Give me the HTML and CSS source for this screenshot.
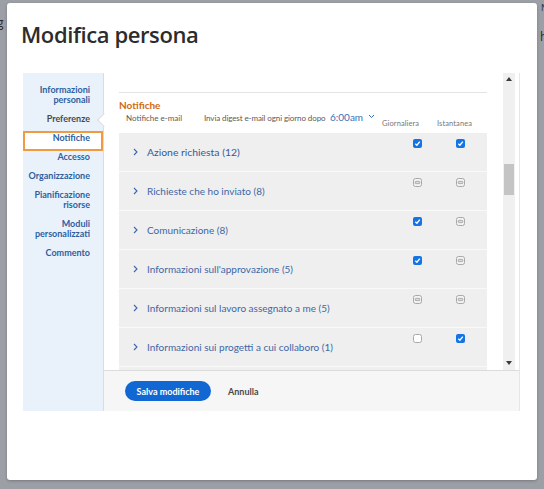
FILE: index.html
```html
<!DOCTYPE html>
<html lang="it">
<head>
<meta charset="utf-8">
<title>Modifica persona</title>
<link rel="stylesheet" href="styles.css">
</head>
<body>
<div class="backdrop">
  <span class="bg-l">g</span>
  <span class="bg-r1">N</span>
  <span class="bg-r2">h</span>
</div>
<div class="modal">
  <h1 class="title">Modifica persona</h1>
  <div class="panel">
    <nav class="side">
      <div class="nav-item">Informazioni<br>personali</div>
      <div class="nav-item current">Preferenze</div>
      <div class="nav-item active"><span>Notifiche</span></div>
      <div class="nav-item">Accesso</div>
      <div class="nav-item">Organizzazione</div>
      <div class="nav-item">Pianificazione<br>risorse</div>
      <div class="nav-item">Moduli<br>personalizzati</div>
      <div class="nav-item">Commento</div>
    </nav>
    <section class="main">
      <div class="notch"></div>
      <div class="scroll">
        <div class="content">
          <div class="cut"></div>
          <div class="sec-title">Notifiche</div>
          <div class="sub">
            <span class="s-email">Notifiche e-mail</span>
            <span class="s-digest">Invia digest e-mail ogni giorno dopo</span>
            <span class="s-time">6:00am <svg class="caret" width="7" height="5" viewBox="0 0 7 5"><polyline points="1,1 3.5,3.5 6,1" fill="none" stroke="#3a6fb7" stroke-width="1"/></svg></span>
            <span class="s-col s-col1">Giornaliera</span>
            <span class="s-col">Istantanea</span>
          </div>
          <div class="rows">
            <div class="row">
              <div class="label big"><svg class="chev" width="5" height="8" viewBox="0 0 5 8"><polyline points="1,1 4,4 1,7" fill="none" stroke="#3a66a8" stroke-width="1.1"/></svg>Azione richiesta (12)</div>
              <div class="cb"><svg width="9" height="9" viewBox="0 0 9 9"><rect x="0" y="0" width="9" height="9" rx="2" fill="#1473e6"/><polyline points="2.3,4.8 3.9,6.2 6.8,2.6" fill="none" stroke="#fff" stroke-width="1.4"/></svg></div>
              <div class="cb"><svg width="9" height="9" viewBox="0 0 9 9"><rect x="0" y="0" width="9" height="9" rx="2" fill="#1473e6"/><polyline points="2.3,4.8 3.9,6.2 6.8,2.6" fill="none" stroke="#fff" stroke-width="1.4"/></svg></div>
            </div>
            <div class="row">
              <div class="label"><svg class="chev" width="5" height="8" viewBox="0 0 5 8"><polyline points="1,1 4,4 1,7" fill="none" stroke="#3a66a8" stroke-width="1.1"/></svg>Richieste che ho inviato (8)</div>
              <div class="cb"><svg width="9" height="9" viewBox="0 0 9 9"><rect x="0.5" y="0.5" width="8" height="8" rx="2" fill="#f2f2f2" stroke="#a8a8a8"/><rect x="2.2" y="3.4" width="4.6" height="2.2" rx="0.6" fill="#dcdcdc" stroke="#a0a0a0" stroke-width="0.8"/></svg></div>
              <div class="cb"><svg width="9" height="9" viewBox="0 0 9 9"><rect x="0.5" y="0.5" width="8" height="8" rx="2" fill="#f2f2f2" stroke="#a8a8a8"/><rect x="2.2" y="3.4" width="4.6" height="2.2" rx="0.6" fill="#dcdcdc" stroke="#a0a0a0" stroke-width="0.8"/></svg></div>
            </div>
            <div class="row">
              <div class="label"><svg class="chev" width="5" height="8" viewBox="0 0 5 8"><polyline points="1,1 4,4 1,7" fill="none" stroke="#3a66a8" stroke-width="1.1"/></svg>Comunicazione (8)</div>
              <div class="cb"><svg width="9" height="9" viewBox="0 0 9 9"><rect x="0" y="0" width="9" height="9" rx="2" fill="#1473e6"/><polyline points="2.3,4.8 3.9,6.2 6.8,2.6" fill="none" stroke="#fff" stroke-width="1.4"/></svg></div>
              <div class="cb"><svg width="9" height="9" viewBox="0 0 9 9"><rect x="0.5" y="0.5" width="8" height="8" rx="2" fill="#f2f2f2" stroke="#a8a8a8"/><rect x="2.2" y="3.4" width="4.6" height="2.2" rx="0.6" fill="#dcdcdc" stroke="#a0a0a0" stroke-width="0.8"/></svg></div>
            </div>
            <div class="row">
              <div class="label"><svg class="chev" width="5" height="8" viewBox="0 0 5 8"><polyline points="1,1 4,4 1,7" fill="none" stroke="#3a66a8" stroke-width="1.1"/></svg>Informazioni sull'approvazione (5)</div>
              <div class="cb"><svg width="9" height="9" viewBox="0 0 9 9"><rect x="0" y="0" width="9" height="9" rx="2" fill="#1473e6"/><polyline points="2.3,4.8 3.9,6.2 6.8,2.6" fill="none" stroke="#fff" stroke-width="1.4"/></svg></div>
              <div class="cb"><svg width="9" height="9" viewBox="0 0 9 9"><rect x="0.5" y="0.5" width="8" height="8" rx="2" fill="#f2f2f2" stroke="#a8a8a8"/><rect x="2.2" y="3.4" width="4.6" height="2.2" rx="0.6" fill="#dcdcdc" stroke="#a0a0a0" stroke-width="0.8"/></svg></div>
            </div>
            <div class="row">
              <div class="label"><svg class="chev" width="5" height="8" viewBox="0 0 5 8"><polyline points="1,1 4,4 1,7" fill="none" stroke="#3a66a8" stroke-width="1.1"/></svg>Informazioni sul lavoro assegnato a me (5)</div>
              <div class="cb"><svg width="9" height="9" viewBox="0 0 9 9"><rect x="0.5" y="0.5" width="8" height="8" rx="2" fill="#f2f2f2" stroke="#a8a8a8"/><rect x="2.2" y="3.4" width="4.6" height="2.2" rx="0.6" fill="#dcdcdc" stroke="#a0a0a0" stroke-width="0.8"/></svg></div>
              <div class="cb"><svg width="9" height="9" viewBox="0 0 9 9"><rect x="0.5" y="0.5" width="8" height="8" rx="2" fill="#f2f2f2" stroke="#a8a8a8"/><rect x="2.2" y="3.4" width="4.6" height="2.2" rx="0.6" fill="#dcdcdc" stroke="#a0a0a0" stroke-width="0.8"/></svg></div>
            </div>
            <div class="row">
              <div class="label"><svg class="chev" width="5" height="8" viewBox="0 0 5 8"><polyline points="1,1 4,4 1,7" fill="none" stroke="#3a66a8" stroke-width="1.1"/></svg>Informazioni sui progetti a cui collaboro (1)</div>
              <div class="cb"><svg width="9" height="9" viewBox="0 0 9 9"><rect x="0.5" y="0.5" width="8" height="8" rx="2" fill="#ffffff" stroke="#a8a8a8"/></svg></div>
              <div class="cb"><svg width="9" height="9" viewBox="0 0 9 9"><rect x="0" y="0" width="9" height="9" rx="2" fill="#1473e6"/><polyline points="2.3,4.8 3.9,6.2 6.8,2.6" fill="none" stroke="#fff" stroke-width="1.4"/></svg></div>
            </div>
            <div class="row"></div>
          </div>
        </div>
        <div class="scrollbar">
          <svg class="arrow" width="6" height="4" viewBox="0 0 6 4"><polygon points="0,4 3,0 6,4" fill="#3a3a3a"/></svg>
          <div class="track"><div class="thumb"></div></div>
          <svg class="arrow" width="6" height="4" viewBox="0 0 6 4"><polygon points="0,0 6,0 3,4" fill="#3a3a3a"/></svg>
        </div>
      </div>
      <div class="footer">
        <button class="btn-primary" type="button">Salva modifiche</button>
        <button class="btn-link" type="button">Annulla</button>
      </div>
    </section>
  </div>
</div>
</body>
</html>
```

FILE: styles.css
```css
* { box-sizing: border-box; }

body {
  margin: 0;
  width: 544px;
  height: 489px;
  overflow: hidden;
  background: #9c9fa6;
  font-family: Lato, "Open Sans", sans-serif;
  position: relative;
}

.backdrop {
  position: absolute;
  inset: 0;
  color: #2b2b2b;
  font-size: 12px;
  font-family: "Open Sans", sans-serif;
}
.bg-l { position: absolute; left: -3px; top: 14px; }
.bg-r1 { position: absolute; left: 541px; top: 1px; font-size: 9px; }
.bg-r2 { position: absolute; left: 540px; top: 28px; }

.modal {
  position: relative;
  margin: 3px 0 0 7px;
  width: 530px;
  height: 477px;
  background: #fff;
  border-radius: 3px;
  box-shadow: 0 1px 3px rgba(0, 0, 0, 0.25);
  padding-left: 16px;
}

.title {
  margin: 0 0 0 -2px;
  padding: 16px 0 0 0;
  height: 70px;
  font-family: "Open Sans", sans-serif;
  font-size: 22px;
  font-weight: 600;
  line-height: 30px;
  color: #2c2c2c;
  letter-spacing: -0.4px;
}

.panel {
  display: flex;
  width: 497px;
  height: 338px;
}

.side {
  width: 80px;
  flex: none;
  background: #e9f2fb;
  padding-top: 7px;
}

.nav-item {
  position: relative;
  padding: 5px 13px 4px 0;
  text-align: right;
  font-size: 9px;
  font-weight: 700;
  line-height: 10px;
  color: #2d5f9f;
}
.nav-item.current { color: #4a4a4a; }
.nav-item.active span { position: relative; z-index: 1; }
.nav-item.active::before {
  content: "";
  position: absolute;
  left: 0;
  right: 0;
  top: 3px;
  bottom: -4px;
  background: #fff;
  border: 2px solid #f29a3f;
}

.main {
  position: relative;
  flex: 1;
  display: flex;
  flex-direction: column;
  border-left: 1px solid #dcdcdc;
  border-right: 1px solid #e6e6e6;
  background: #fff;
}

.notch {
  position: absolute;
  left: -5px;
  top: 42px;
  width: 10px;
  height: 10px;
  background: #fff;
  border-left: 1px solid #dcdcdc;
  border-bottom: 1px solid #dcdcdc;
  transform: rotate(45deg);
}

.scroll {
  display: flex;
  height: 297px;
}

.content {
  width: 399px;
  flex: none;
  padding-left: 15px;
  overflow: hidden;
}
.content > * { width: 368px; }

.cut {
  height: 20px;
  border-bottom: 1px solid #e3e3e3;
}

.sec-title {
  margin-top: 6px;
  font-size: 10px;
  line-height: 12px;
  font-weight: 700;
  color: #d2690f;
}

.sub {
  display: flex;
  align-items: flex-start;
  height: 22px;
  font-size: 8px;
  line-height: 10px;
  color: #5a5a5a;
}
.s-email { margin: 2px 0 0 7px; width: 78px; flex: none; }
.s-digest { margin-top: 2px; width: 126px; flex: none; letter-spacing: -0.1px; }
.s-time {
  width: 52px;
  flex: none;
  font-size: 10px;
  line-height: 12px;
  color: #3a6fb7;
  white-space: nowrap;
}
.caret { margin-left: 2px; vertical-align: 2px; }
.s-col { margin-top: 8px; color: #777; font-size: 7.5px; letter-spacing: 0.1px; }
.s-col1 { width: 55px; flex: none; }

.rows { background: #efefef; }

.row {
  display: grid;
  grid-template-columns: 1fr 43px 43px;
  padding-right: 5px;
  height: 39px;
  border-bottom: 1px solid #f9f9f9;
}

.label {
  align-self: center;
  display: flex;
  align-items: center;
  padding-left: 14px;
  font-size: 10px;
  color: #3d67a6;
  letter-spacing: 0;
  white-space: nowrap;
}
.label.big { font-size: 10.4px; color: #2f5b9c; }
.chev { margin-right: 9px; flex: none; }

.cb {
  display: flex;
  justify-content: center;
  padding-top: 6px;
}
.cb svg { display: block; }

.scrollbar {
  width: 12px;
  flex: none;
  background: #f0f0f0;
  display: flex;
  flex-direction: column;
  align-items: center;
  padding: 4px 0 5px;
}
.arrow { flex: none; display: block; }
.track { flex: 1; width: 100%; padding-top: 83px; }
.thumb { width: 10px; height: 31px; margin: 0 auto; background: #c4c4c4; }

.footer {
  height: 41px;
  border-top: 1px solid #dcdcdc;
  background: #f6f6f6;
  display: flex;
  align-items: center;
  padding-left: 21px;
  gap: 17px;
}

.btn-primary {
  height: 20px;
  width: 86px;
  border: none;
  border-radius: 10px;
  background: #1268d3;
  color: #fff;
  font-family: Lato, "Open Sans", sans-serif;
  font-size: 9px;
  font-weight: 700;
  padding: 0;
}

.btn-link {
  border: none;
  background: none;
  padding: 0;
  font-family: Lato, "Open Sans", sans-serif;
  font-size: 9px;
  font-weight: 700;
  color: #4b4b4b;
}
```
